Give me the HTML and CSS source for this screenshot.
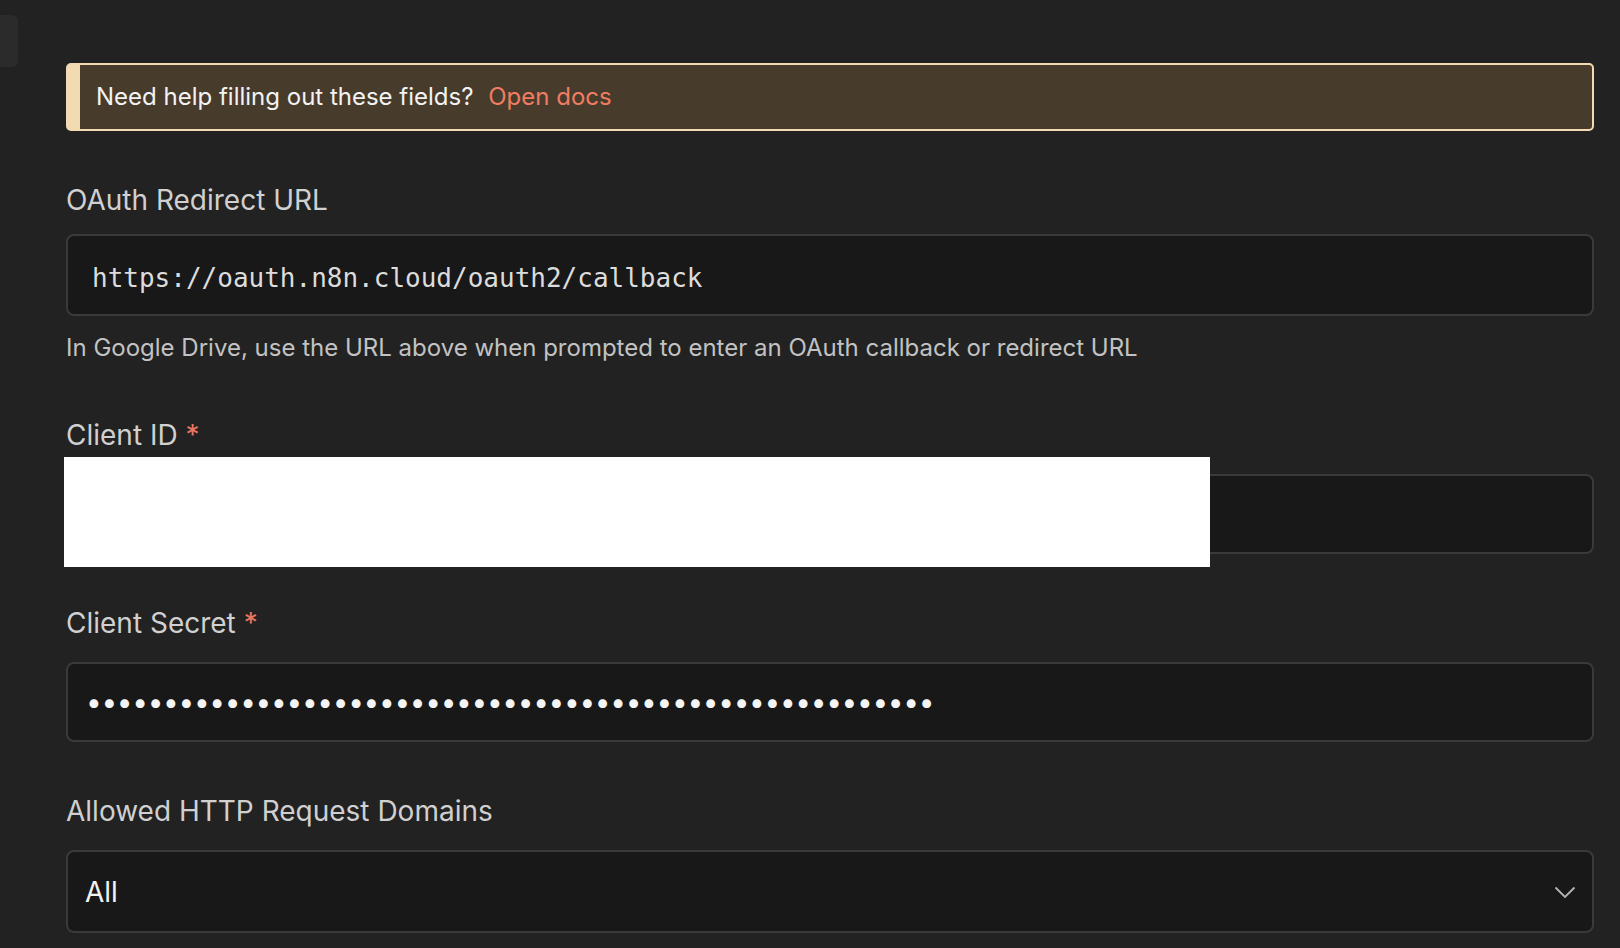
FILE: index.html
```html
<!DOCTYPE html>
<html lang="en">
<head>
<meta charset="utf-8">
<title>Google Drive credentials</title>
<link rel="stylesheet" href="styles.css">
</head>
<body>
<div class="page">
  <div class="rail"></div>
  <main class="content">
    <div class="notice">
      <span class="notice-text">Need help filling out these fields?</span>
      <a class="notice-link" href="#">Open docs</a>
    </div>

    <div class="field">
      <label class="label">OAuth Redirect URL</label>
      <div class="box box-copy"><span class="mono">https://oauth.n8n.cloud/oauth2/callback</span></div>
      <p class="hint">In Google Drive, use the URL above when prompted to enter an OAuth callback or redirect URL</p>
    </div>

    <div class="field field-redacted">
      <label class="label">Client ID <span class="req">*</span></label>
      <div class="box"></div>
      <div class="redact"></div>
    </div>

    <div class="field">
      <label class="label">Client Secret <span class="req">*</span></label>
      <div class="box"><span class="dots">•••••••••••••••••••••••••••••••••••••••••••••••••••••••</span></div>
    </div>

    <div class="field">
      <label class="label">Allowed HTTP Request Domains</label>
      <div class="box box-select">
        <span class="value">All</span>
        <svg class="chev" width="22" height="13" viewBox="0 0 22 13"><path d="M1.5 1.5 L11 11 L20.5 1.5" fill="none" stroke="#b4b4b4" stroke-width="1.8"/></svg>
      </div>
    </div>
  </main>
</div>
</body>
</html>
```
FILE: styles.css
```css
* { box-sizing: border-box; }
html, body { margin: 0; padding: 0; }
body {
  background: #222222;
  font-family: Inter, "Noto Sans", sans-serif;
  color: #d2d2d2;
  width: 1620px;
  height: 948px;
  overflow: hidden;
}
.page {
  display: flex;
  align-items: flex-start;
  height: 948px;
}
.rail {
  flex: 0 0 18px;
  height: 52px;
  margin-top: 15px;
  background: #2b2b2b;
  border-radius: 0 6px 6px 0;
}
.content {
  flex: 1;
  padding: 63px 26px 0 48px;
  display: flex;
  flex-direction: column;
  gap: 51px;
}
.notice {
  height: 68px;
  background: #473b2b;
  border: 2px solid #f2dbb3;
  border-left-width: 14px;
  border-radius: 5px;
  padding: 14px 15px 14px 16px;
  font-size: 24px;
  line-height: 36px;
  color: #f3f3f3;
  white-space: nowrap;
}
.notice-link {
  color: #f07d62;
  text-decoration: none;
  margin-left: 8px;
}
.field {
  display: flex;
  flex-direction: column;
}
.field-redacted { position: relative; }
.label {
  font-size: 28px;
  line-height: 36px;
  color: #d0d0d0;
  margin-bottom: 21px;
}
.field:nth-of-type(2) .label { margin-bottom: 16px; }
.req { color: #ea7660; }
.box {
  height: 80px;
  background: #181818;
  border: 2px solid #3a3a3a;
  border-radius: 8px;
  display: flex;
  align-items: center;
  padding: 0 16px;
}
.box-copy {
  height: 82px;
  padding: 5px 24px 0 24px;
}
.mono {
  font-family: "DejaVu Sans Mono", "Liberation Mono", monospace;
  font-size: 26px;
  color: #dcdcdc;
}
.hint {
  margin: 14px 0 0;
  font-size: 24px;
  line-height: 36px;
  color: #c2c2c2;
}
.dots {
  font-size: 28px;
  color: #f4f4f4;
  letter-spacing: -0.33px;
  margin-left: 2px;
}
.box-select {
  height: 83px;
  justify-content: space-between;
  padding: 0 16px 0 17px;
}
.value {
  font-size: 28px;
  color: #f2f2f2;
}
.chev { display: block; margin-top: 1px; }
.redact {
  position: absolute;
  left: -2px;
  top: 40px;
  width: 1146px;
  height: 110px;
  background: #ffffff;
}
```
